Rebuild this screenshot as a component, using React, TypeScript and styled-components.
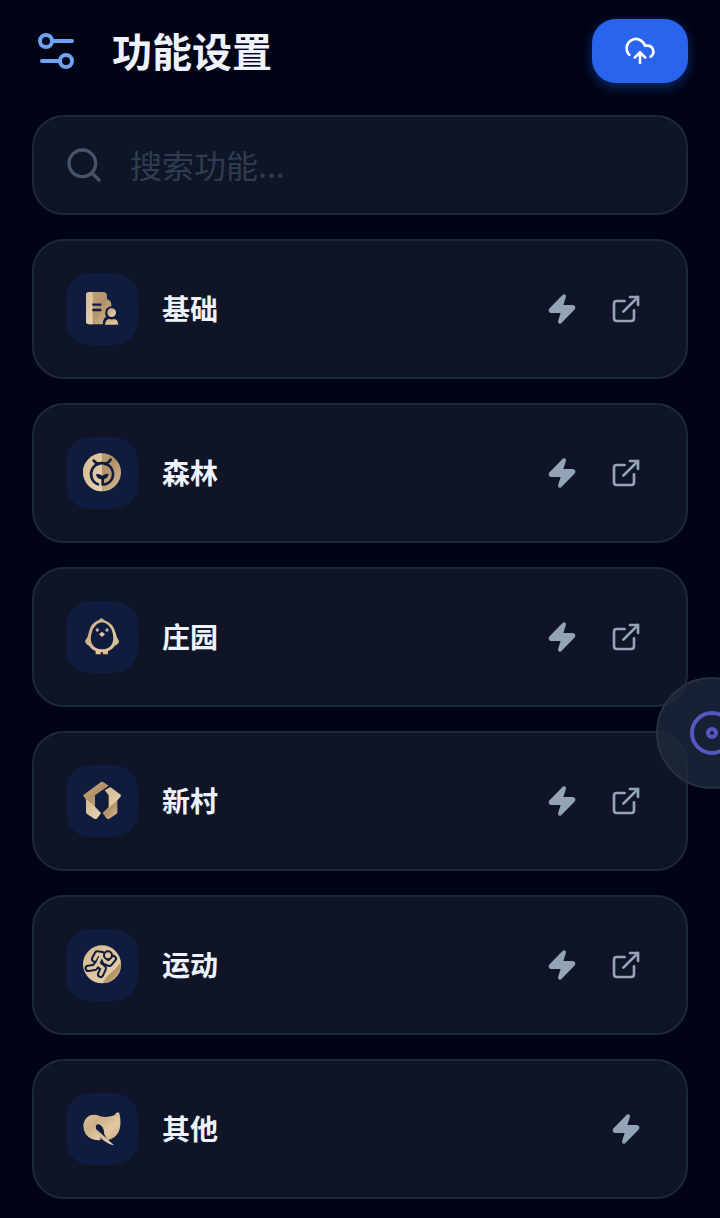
import React from 'react';
import styled, { createGlobalStyle } from 'styled-components';
import { CloudUpload, Disc, ExternalLink, Search, Zap } from 'lucide-react';

interface Feature {
	id: string;
	name: string;
	icon: React.ReactNode;
	hasLink: boolean;
}

const INK = '#101c3d';
const RUNNER = 'M38 42L46 27L60 29M60 30L70 50L82 55L94 41M58 32L47 56L38 67L19 70M47 56L64 70L56 88';

const BasicIcon = () => (
	<svg viewBox="0 0 120 120" aria-hidden="true">
		<path d="M22 9H64Q73 9 75 18V31Q88 34 88 48V62L74 106H22Q12 106 12 96V19Q12 9 22 9Z" fill="url(#gold-dark)" />
		<path d="M22 9H32V106H22Q12 106 12 96V19Q12 9 22 9Z" fill="url(#gold-light)" />
		<path d="M31 47H58M31 63H58" stroke={INK} strokeWidth="7" />
		<circle cx="89" cy="72" r="20" fill={INK} />
		<path d="M62 108Q62 82 80 82H98Q116 82 116 108Z" fill={INK} />
		<circle cx="89" cy="71" r="13" fill="url(#gold)" />
		<path d="M69 107Q70 90 84 90Q89 93 94 90Q108 90 109 107Z" fill="url(#gold)" />
	</svg>
);

const ForestIcon = () => (
	<svg viewBox="0 0 120 120" aria-hidden="true">
		<circle cx="60" cy="58" r="57" fill="url(#gold-dark)" />
		<path d="M60 1A57 57 0 0 0 60 115Z" fill="url(#gold-light)" />
		<g fill="none" stroke={INK} strokeWidth="8" strokeLinecap="round">
			<path d="M48 94A33 33 0 1 1 84 86Q74 96 62 94V72" />
			<path d="M35 23Q41 31 50 33M86 20Q80 30 70 33" />
		</g>
		<path d="M61 79Q43 79 42 63Q57 62 61 70Q65 61 80 62Q78 78 61 79Z" fill={INK} />
	</svg>
);

const FarmIcon = () => (
	<svg viewBox="0 0 120 120" aria-hidden="true">
		<path d="M51 9Q58 -1 66 9Q94 18 101 48Q103 62 111 72Q111 82 99 86Q91 98 78 103V112H63V106H56V112H41V103Q28 98 21 86Q10 82 9 72Q18 62 20 48Q25 18 51 9Z" fill="url(#gold)" />
		<path d="M60 16Q84 19 92 48Q96 66 91 79Q83 97 60 97Q37 97 29 79Q24 66 29 48Q36 19 60 16Z" fill={INK} />
		<circle cx="46" cy="39" r="5" fill="#bcb2a5" />
		<circle cx="75" cy="39" r="5" fill="#bcb2a5" />
		<path d="M60 44L69 52L60 60L51 52Z" fill="#e2c9a4" />
	</svg>
);

const VillageIcon = () => (
	<svg viewBox="0 0 120 120" aria-hidden="true">
		<path d="M3 43L57 3Q61 1 65 4L80 14L39 43V79L12 56Z" fill="url(#gold-dark)" />
		<path d="M12 54L40 78L57 96L46 112Q42 116 37 113L15 99Q12 97 12 93Z" fill="url(#gold-light)" />
		<path d="M106 54L80 78L62 96L73 112Q77 116 82 113L103 99Q106 97 106 93Z" fill="url(#gold-dark)" />
		<path d="M68 28L85 18L116 41Q118 44 115 48L107 57L80 80V43Z" fill="url(#gold-light)" />
	</svg>
);

const SportIcon = () => (
	<svg viewBox="0 0 120 120" aria-hidden="true">
		<circle cx="60" cy="58" r="57" fill="url(#gold-light)" />
		<path d="M63 114Q72 94 96 76L115 54Q122 81 96 103Q81 115 63 114Z" fill="url(#gold-dark)" />
		<g fill="none" strokeLinecap="round" strokeLinejoin="round">
			<path d={RUNNER} stroke={INK} strokeWidth="22" />
			<path d={RUNNER} stroke="#dfc6a0" strokeWidth="10" />
		</g>
		<circle cx="78" cy="31" r="12" fill="#dfc6a0" stroke={INK} strokeWidth="6" />
	</svg>
);

const OtherIcon = () => (
	<svg viewBox="0 0 120 120" aria-hidden="true">
		<path d="M97 19Q105 6 112 12Q122 57 103 79Q91 92 76 93L65 71Q64 51 50 46Q39 48 43 61Q52 71 56 93Q26 96 11 75Q-2 52 9 33Q20 14 44 18Q68 30 97 19Z" fill="url(#gold)" />
		<path d="M45 62L96 109Q86 108 78 103Q63 95 53 84Z" fill="url(#gold-light)" />
		<path d="M41 50Q46 43 55 49Q68 58 66 78L43 59Z" fill={INK} />
	</svg>
);

const features: Feature[] = [
	{ id: 'basic', name: '基础', icon: <BasicIcon />, hasLink: true },
	{ id: 'forest', name: '森林', icon: <ForestIcon />, hasLink: true },
	{ id: 'farm', name: '庄园', icon: <FarmIcon />, hasLink: true },
	{ id: 'village', name: '新村', icon: <VillageIcon />, hasLink: true },
	{ id: 'sport', name: '运动', icon: <SportIcon />, hasLink: true },
	{ id: 'other', name: '其他', icon: <OtherIcon />, hasLink: false },
];

const App: React.FC = () => (
	<Page>
		<GlobalStyle />
		{/* shared gradients for the feature icons */}
		<GradientDefs aria-hidden="true">
			<defs>
				<linearGradient id="gold" x1="0" y1="0" x2="1" y2="1">
					<stop offset="0" stopColor="#dcc29c" />
					<stop offset="0.35" stopColor="#cdb08a" />
					<stop offset="0.65" stopColor="#e2c8a0" />
					<stop offset="1" stopColor="#c9ab82" />
				</linearGradient>
				<linearGradient id="gold-light" x1="0" y1="0" x2="1" y2="1">
					<stop offset="0" stopColor="#d4b890" />
					<stop offset="1" stopColor="#e8d3b1" />
				</linearGradient>
				<linearGradient id="gold-dark" x1="0" y1="0" x2="1" y2="1">
					<stop offset="0" stopColor="#c4a57c" />
					<stop offset="0.5" stopColor="#b39269" />
					<stop offset="1" stopColor="#d6bb93" />
				</linearGradient>
			</defs>
		</GradientDefs>
		<Header>
			<SlidersIcon viewBox="0 0 24 24" aria-hidden="true">
				<path d="M20 7h-9M14 17H5" />
				<circle cx="17" cy="17" r="3" />
				<circle cx="7" cy="7" r="3" />
			</SlidersIcon>
			<Title>功能设置</Title>
			<UploadButton type="button" aria-label="上传">
				<CloudUpload size={32} />
			</UploadButton>
		</Header>
		<SearchBox>
			<Search size={40} />
			<SearchInput type="text" placeholder="搜索功能..." aria-label="搜索功能" />
		</SearchBox>
		<FeatureList>
			{features.map((feature) => (
				<FeatureCard key={feature.id}>
					<IconTile>{feature.icon}</IconTile>
					<FeatureName>{feature.name}</FeatureName>
					<Actions>
						<ActionButton type="button" aria-label={`运行${feature.name}`}>
							<Zap size={32} fill="currentColor" />
						</ActionButton>
						{feature.hasLink && (
							<ActionButton type="button" aria-label={`打开${feature.name}`}>
								<ExternalLink size={32} />
							</ActionButton>
						)}
					</Actions>
				</FeatureCard>
			))}
		</FeatureList>
		<FloatingButton type="button" aria-label="悬浮菜单">
			<Disc size={48} />
		</FloatingButton>
	</Page>
);

const GlobalStyle = createGlobalStyle`
	* {
		box-sizing: border-box;
	}
	body {
		margin: 0;
		background: #010416;
		overflow-x: hidden;
	}
	button, input {
		font-family: inherit;
	}
`;

const Page = styled.main`
	padding: 19px 32px;
	color: #eef2fb;
	font-family: 'Noto Sans CJK SC', sans-serif;
`;

const GradientDefs = styled.svg`
	position: absolute;
	width: 0;
	height: 0;
`;

const Header = styled.header`
	display: flex;
	align-items: center;
	height: 64px;
	margin-bottom: 32px;
`;

const SlidersIcon = styled.svg`
	width: 48px;
	height: 48px;
	margin-right: 32px;
	fill: none;
	stroke: #6ea2f2;
	stroke-width: 2;
	stroke-linecap: round;
`;

const Title = styled.h1`
	flex: 1;
	margin: 0;
	padding-bottom: 2px;
	font-size: 40px;
	line-height: 56px;
	font-weight: 700;
`;

const UploadButton = styled.button`
	display: flex;
	align-items: center;
	justify-content: center;
	width: 96px;
	height: 64px;
	padding: 0;
	border: 0;
	border-radius: 24px;
	background: #2864ec;
	color: #fff;
	box-shadow: 0 4px 12px rgba(37, 99, 235, 0.4);
`;

const SearchBox = styled.label`
	display: flex;
	align-items: center;
	gap: 26px;
	height: 100px;
	padding: 0 30px;
	margin-bottom: 24px;
	border: 2px solid #1b2838;
	border-radius: 32px;
	background: #0e1526;
	color: #475467;
`;

const SearchInput = styled.input`
	flex: 1;
	min-width: 0;
	padding: 0 0 2px;
	border: 0;
	outline: 0;
	background: transparent;
	color: #e2e8f0;
	font-size: 32px;
	line-height: 48px;

	&::placeholder {
		color: #2f3c50;
		opacity: 1;
	}
`;

const FeatureList = styled.ul`
	display: flex;
	flex-direction: column;
	gap: 24px;
	margin: 0;
	padding: 0;
	list-style: none;
`;

const FeatureCard = styled.li`
	display: flex;
	align-items: center;
	height: 140px;
	padding: 0 32px;
	border: 2px solid #1b2838;
	border-radius: 32px;
	background: #0f1527;
`;

const IconTile = styled.div`
	display: flex;
	align-items: center;
	justify-content: center;
	width: 72px;
	height: 72px;
	margin-right: 24px;
	border-radius: 24px;
	background: #101c3d;

	svg {
		width: 40px;
		height: 40px;
	}
`;

const FeatureName = styled.span`
	flex: 1;
	padding-bottom: 2px;
	font-size: 28px;
	line-height: 40px;
	font-weight: 700;
`;

const Actions = styled.div`
	display: flex;
	gap: 8px;
`;

const ActionButton = styled.button`
	display: flex;
	padding: 12px;
	border: 0;
	background: transparent;
	color: #94a3b8;
`;

const FloatingButton = styled.button`
	position: fixed;
	top: 677px;
	right: -48px;
	display: flex;
	align-items: center;
	justify-content: center;
	width: 112px;
	height: 112px;
	padding: 0;
	border: 2px solid #27313f;
	border-radius: 50%;
	background: rgba(30, 41, 59, 0.8);
	color: #5557c2;
`;

export default App;
